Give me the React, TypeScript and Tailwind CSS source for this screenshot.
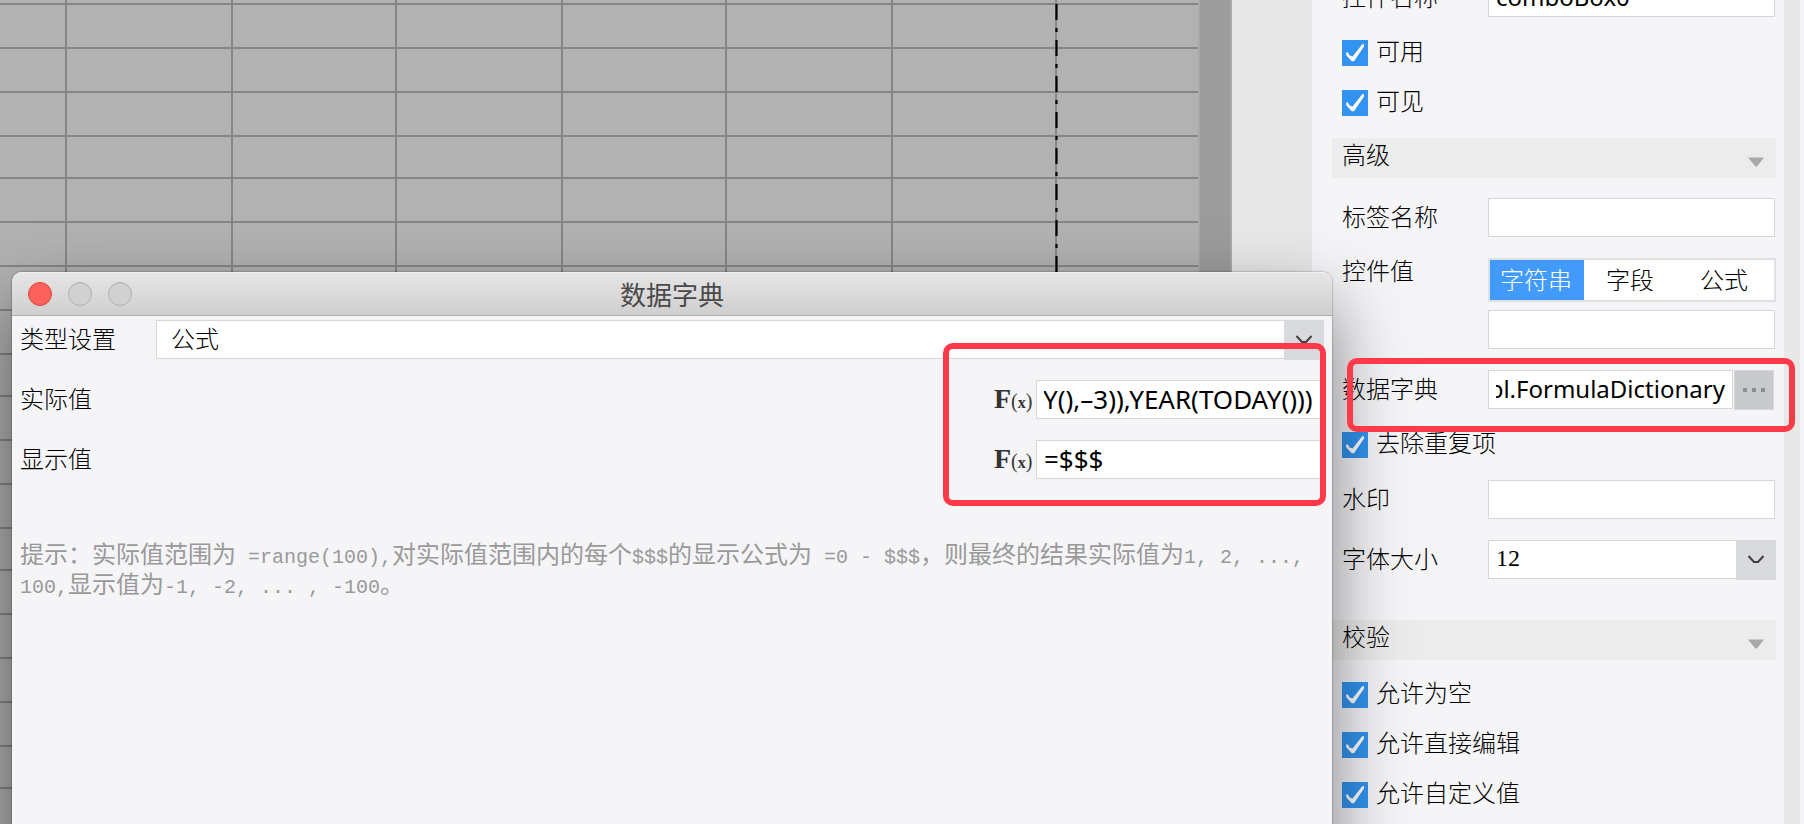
import { useEffect, useRef, useState } from "react";
import type { ReactNode } from "react";

const COLUMN_EDGES = [67, 166, 164, 166, 164, 166, 164, 141];
const ROW_HEIGHTS = [5, 44, 44, 44, 42, 44, 44, 44, 44, 42, 44, 44, 44, 42, 44, 44, 44, 44, 42, 44];

function Sheet() {
  return (
    <div className="relative min-w-0 flex-1 overflow-hidden bg-[#b2b2b2]">
      <table className="table-fixed border-separate border-spacing-0" aria-label="报表">
        <colgroup>
          {COLUMN_EDGES.map((w, i) => (
            <col key={i} style={{ width: w }} />
          ))}
        </colgroup>
        <tbody>
          {ROW_HEIGHTS.map((h, r) => (
            <tr key={r} style={{ height: h }}>
              {COLUMN_EDGES.map((_, c) => (
                <td
                  key={c}
                  className={
                    c === COLUMN_EDGES.length - 1
                      ? "border-b-2 border-[#868686] p-0"
                      : "border-r-2 border-b-2 border-[#868686] p-0"
                  }
                />
              ))}
            </tr>
          ))}
        </tbody>
      </table>
      <svg className="absolute top-1 left-[1055px]" width="3" height="820" aria-hidden="true">
        <line x1="1.5" y1="0" x2="1.5" y2="820" stroke="#000" strokeWidth="2.2" strokeDasharray="16 8 4 8" />
      </svg>
    </div>
  );
}

function TextBox({
  id,
  label,
  value,
  showEnd,
  className = "text-2xl",
}: {
  id: string;
  label?: string;
  value?: string;
  showEnd?: boolean;
  className?: string;
}) {
  const ref = useRef<HTMLInputElement>(null);
  useEffect(() => {
    if (showEnd && ref.current) ref.current.scrollLeft = ref.current.scrollWidth;
  }, [showEnd]);
  return (
    <input
      ref={ref}
      id={id}
      aria-label={label}
      defaultValue={value}
      className={`h-[39px] min-w-0 border border-[#d6d7da] bg-white px-[7px] pb-0.5 font-['Noto_Sans','Noto_Sans_CJK_SC',sans-serif] font-normal text-black outline-none ${className}`}
    />
  );
}

function DropDown({
  id,
  value,
  className = "",
}: {
  id: string;
  value: string;
  className?: string;
}) {
  return (
    <div className="relative flex h-10 min-w-0 flex-1">
      <select
        id={id}
        className={`h-[39px] w-full appearance-none border border-[#d6d7da] bg-white outline-none ${className}`}
      >
        <option>{value}</option>
      </select>
      <span className="pointer-events-none absolute inset-y-0 right-0 flex w-10 items-center justify-center bg-[#d9dade]">
        <svg width="18" height="12" viewBox="0 0 18 12" aria-hidden="true">
          <path d="M1.5 2 L7 8 H11 L16.5 2" fill="none" stroke="#3f3f41" strokeWidth="2" />
        </svg>
      </span>
    </div>
  );
}

function Check({ label, className = "" }: { label: string; className?: string }) {
  return (
    <label className={`ml-2.5 flex h-[26px] w-fit items-center gap-2 ${className}`}>
      <span className="relative size-[26px]">
        <input type="checkbox" defaultChecked className="peer block size-[26px] appearance-none bg-white checked:bg-[#3294f0]" />
        <svg
          className="pointer-events-none absolute inset-0 hidden peer-checked:block"
          width="26"
          height="26"
          viewBox="0 0 26 26"
          aria-hidden="true"
        >
          <path d="M4 12.4 H6 L7.6 15.4 L10.6 16.4 L20 4.4 L22 4 V6.4 L12 21.2 H9.8 L4.4 15.6 Z" fill="#fff" />
        </svg>
      </span>
      <span className="pb-1.5 leading-6">{label}</span>
    </label>
  );
}

function SectionHeader({ children, className = "" }: { children: ReactNode; className?: string }) {
  return (
    <button
      type="button"
      className={`flex h-10 w-full shrink-0 items-center justify-between bg-[#ececec] pr-3 pl-2.5 text-left ${className}`}
    >
      <span className="pb-2 leading-6">{children}</span>
      <svg className="mt-2" width="16" height="10" viewBox="0 0 16 10" aria-hidden="true">
        <path d="M0 0.5 H16 L9 9.5 H7.5 Z" fill="#a8a8a8" />
      </svg>
    </button>
  );
}

function Field({
  id,
  label,
  children,
  className = "",
}: {
  id: string;
  label: string;
  children: ReactNode;
  className?: string;
}) {
  return (
    <div className={`flex h-10 shrink-0 pl-2.5 ${className}`}>
      <label htmlFor={id} className="w-[146px] shrink-0 leading-9">
        {label}
      </label>
      {children}
    </div>
  );
}

function Properties() {
  const [kind, setKind] = useState("字符串");
  return (
    <aside className="flex w-[492px] shrink-0 bg-[#f5f5f8] pl-5">
      <div className="-mt-[22px] flex min-w-0 flex-1 flex-col">
        <Field id="name" label="控件名称">
          <TextBox id="name" value="comboBox0" className="mr-px flex-1 text-2xl" />
        </Field>
        <Check label="可用" className="mt-[22px]" />
        <Check label="可见" className="mt-6" />
        <SectionHeader className="mt-[22px]">高级</SectionHeader>
        <Field id="tag" label="标签名称" className="mt-5">
          <TextBox id="tag" className="mr-px flex-1 text-2xl" />
        </Field>
        <div className="mt-5 flex pl-2.5">
          <label htmlFor="val" className="w-[146px] shrink-0 leading-6">
            控件值
          </label>
          <div className="flex min-w-0 flex-1 flex-col gap-2">
            <div className="grid h-11 grid-cols-3 border-2 border-[#e0e1e4] bg-white pr-0.5">
              {["字符串", "字段", "公式"].map((k) => (
                <button
                  key={k}
                  type="button"
                  aria-pressed={kind === k}
                  onClick={() => setKind(k)}
                  className={kind === k ? "bg-[#429bfb] pr-0.5 pb-[3px] text-white" : "bg-white pr-0.5 pb-[3px]"}
                >
                  {k}
                </button>
              ))}
            </div>
            <div className="flex h-10">
              <TextBox id="val" className="mr-px flex-1 text-2xl" />
            </div>
          </div>
        </div>
        <Field id="dict" label="数据字典" className="mt-5">
          <TextBox id="dict" value="impl.FormulaDictionary" showEnd className="flex-1 text-2xl" />
          <button
            type="button"
            aria-label="编辑数据字典"
            className="mr-0.5 ml-px flex w-10 items-center justify-center gap-[5px] border border-[#d6d7da] bg-[#c9cace]"
          >
            <i className="size-1 bg-[#8d8e91]" />
            <i className="size-1 bg-[#8d8e91]" />
            <i className="size-1 bg-[#8d8e91]" />
          </button>
        </Field>
        <Check label="去除重复项" className="mt-[22px]" />
        <Field id="mark" label="水印" className="mt-[22px]">
          <TextBox id="mark" className="mr-px flex-1 text-2xl" />
        </Field>
        <Field id="size" label="字体大小" className="mt-5">
          <DropDown id="size" value="12" className="px-[7px] pb-1 font-['Liberation_Serif',serif] text-2xl" />
        </Field>
        <SectionHeader className="mt-10">校验</SectionHeader>
        <Check label="允许为空" className="mt-[22px]" />
        <Check label="允许直接编辑" className="mt-6" />
        <Check label="允许自定义值" className="mt-6" />
      </div>
      <div className="mr-1 ml-2 w-4 bg-[#e8e8e8]" />
    </aside>
  );
}

function FormulaField({ id, label, value }: { id: string; label: string; value: string }) {
  return (
    <div className="flex h-10">
      <label htmlFor={id} className="flex-1 leading-9">
        {label}
      </label>
      <button
        type="button"
        aria-label="公式"
        className="mr-2 flex w-[34px] items-baseline font-['Liberation_Serif',serif] font-normal text-[#333]"
      >
        <span className="text-[28px] leading-[38px] font-bold">F</span>
        <span className="text-xl leading-[38px]">
          (<b className="text-base">x</b>)
        </span>
      </button>
      <TextBox id={id} value={value} showEnd className="mr-[3px] w-[285px] text-[26px]" />
    </div>
  );
}

function Half({ children }: { children: string }) {
  return <span className="font-['Liberation_Mono',monospace] text-xl leading-none whitespace-pre-wrap">{children}</span>;
}

function Dialog() {
  return (
    <section
      aria-label="数据字典"
      className="absolute top-[272px] right-[472px] -bottom-24 left-3 flex flex-col rounded-t-[10px] bg-[#f5f5f8] shadow-[0_0_2px_rgba(0,0,0,0.5),0_32px_72px_rgba(0,0,0,0.5)]"
    >
      <header className="grid h-11 grid-cols-[1fr_auto_1fr] items-center rounded-t-[10px] border-t border-b border-t-[#f2f2f2] border-b-[#aeaeae] bg-linear-to-b from-[#e6e6e6] to-[#cfcfcf] px-4">
        <div className="flex gap-4">
          <button type="button" aria-label="关闭" className="size-6 rounded-full border border-[#e2463f] bg-[#fd615c]" />
          <button type="button" aria-label="最小化" className="size-6 rounded-full border border-[#b0b0b0] bg-[#d1d1d1]" />
          <button type="button" aria-label="缩放" className="size-6 rounded-full border border-[#b0b0b0] bg-[#d1d1d1]" />
        </div>
        <h1 className="text-[26px] leading-8 font-normal text-[#4a4a4a]">数据字典</h1>
      </header>
      <form className="flex flex-col gap-5 px-2 pt-1">
        <div className="flex h-10">
          <label htmlFor="type" className="w-[136px] leading-9">
            类型设置
          </label>
          <DropDown id="type" value="公式" className="pr-10 pb-[3px] pl-3.5 text-2xl" />
        </div>
        <FormulaField id="real" label="实际值" value="Y(),–3)),YEAR(TODAY()))" />
        <FormulaField id="show" label="显示值" value="=$$$" />
      </form>
      <p className="mt-[58px] px-2 leading-[30px] font-normal text-[#999]">
        提示：实际值范围为<Half>{" =range(100),"}</Half>对实际值范围内的每个<Half>$$$</Half>的显示公式为
        <Half>{" =0 - $$$"}</Half>，则最终的结果实际值为<Half>1, 2, ...,</Half>
        <br />
        <Half>100,</Half>显示值为<Half>-1, -2, ... , -100</Half>。
      </p>
    </section>
  );
}

export default function App() {
  return (
    <div className="relative flex h-screen overflow-hidden bg-[#e8e8e8] font-['Noto_Sans_CJK_SC',sans-serif] text-2xl font-light text-black">
      <main className="flex min-w-0 flex-1">
        <Sheet />
        <div className="w-[34px] shrink-0 border-x-2 border-[#a9a9a9] bg-[#9c9c9c]" />
        <div className="w-20 shrink-0" />
      </main>
      <Properties />
      <Dialog />
      <div className="pointer-events-none absolute top-[343px] right-[478px] h-[163px] w-[383px] rounded-[10px] border-6 border-[#fe3949]" />
      <div className="pointer-events-none absolute top-[358px] right-[9px] h-[74px] w-[448px] rounded-[10px] border-6 border-[#fe3949]" />
    </div>
  );
}
